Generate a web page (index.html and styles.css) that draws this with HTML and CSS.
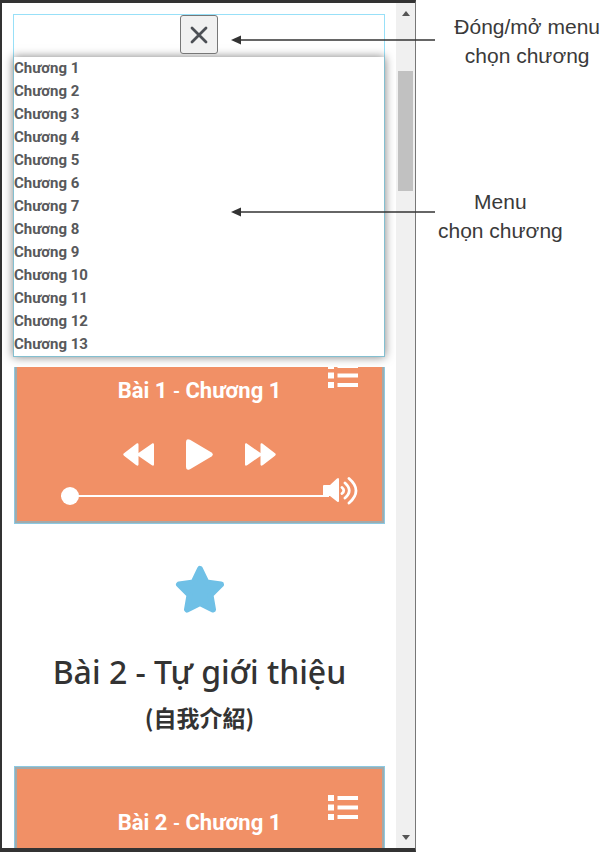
FILE: index.html
```
<!DOCTYPE html>
<html lang="vi">
<head>
<meta charset="utf-8">
<meta name="viewport" content="width=device-width, initial-scale=1">
<title>Menu chọn chương</title>
<link rel="stylesheet" href="styles.css">
</head>
<body>
<svg class="sprite" aria-hidden="true">
  <symbol id="list" viewBox="0 0 30 25">
    <path d="M0 0h6v6H0zM0 9.500h6v6H0zM0 19h6v6H0z"/>
    <path d="M9.500 1h20.500v4H9.500zM9.500 10.500h20.500v4H9.500zM9.500 20h20.500v4H9.500z"/>
  </symbol>
  <symbol id="skip" viewBox="0 0 31 23">
    <path d="M0 1.500Q0 0 1.500 .3L2.500 1 15.500 10V1.500Q15.500 0 17 .3L18 1 30 10.300Q31.500 11.500 30 12.700L18 22Q15.500 23.500 15.500 21.500V13L2.500 22Q0 23.500 0 21.500Z"/>
  </symbol>
  <symbol id="play" viewBox="0 0 27 31">
    <path d="M0 3Q0-1 4 .8L25.500 13.500Q28 15.500 25.500 17.500L4 30.200Q0 32 0 28Z"/>
  </symbol>
  <symbol id="volume" viewBox="0 0 35 28">
    <path d="M1 8h6l7-6.500Q16 0 16 2.500v21Q16 26 14 24.500L7 19H1Q0 19 0 18V9Q0 8 1 8Z"/>
    <path d="M19 10.500q3.500 3 0 6M22 6q8.500 7.500 0 15M26 1.500q14 12 0 24.500" fill="none" stroke="currentColor" stroke-width="2.800" stroke-linecap="round"/>
  </symbol>
  <symbol id="arrow" viewBox="0 0 204 10">
    <path d="M0 5 10 .5v9z"/>
    <path d="M9 4.300h195v1.400H9z"/>
  </symbol>
</svg>

<main class="figure">
  <section class="phone">
    <div class="page">
      <nav class="chapters" aria-label="Chọn chương">
        <div class="toggle-row">
          <button class="toggle" type="button" aria-label="Đóng menu">
            <svg width="18" height="18" viewBox="0 0 18 18"><path d="M2 2l14 14M16 2L2 16" fill="none" stroke="#4c4f55" stroke-width="2.800" stroke-linecap="round"/></svg>
          </button>
        </div>
        <ul class="chapter-list">
          <li><a href="#c1">Chương 1</a></li>
          <li><a href="#c2">Chương 2</a></li>
          <li><a href="#c3">Chương 3</a></li>
          <li><a href="#c4">Chương 4</a></li>
          <li><a href="#c5">Chương 5</a></li>
          <li><a href="#c6">Chương 6</a></li>
          <li><a href="#c7">Chương 7</a></li>
          <li><a href="#c8">Chương 8</a></li>
          <li><a href="#c9">Chương 9</a></li>
          <li><a href="#c10">Chương 10</a></li>
          <li><a href="#c11">Chương 11</a></li>
          <li><a href="#c12">Chương 12</a></li>
          <li><a href="#c13">Chương 13</a></li>
        </ul>
      </nav>

      <div class="lessons">
        <article class="player player-scrolled">
          <header class="player-head">
            <h2 class="player-title">Bài 1 <small>-</small> Chương 1</h2>
            <button class="icon-button list-button" type="button" aria-label="Danh sách"><svg width="30" height="25"><use href="#list"/></svg></button>
          </header>
          <div class="controls">
            <button class="icon-button flip" type="button" aria-label="Lùi"><svg width="31" height="23"><use href="#skip"/></svg></button>
            <button class="icon-button" type="button" aria-label="Phát"><svg width="27" height="31"><use href="#play"/></svg></button>
            <button class="icon-button" type="button" aria-label="Tới"><svg width="31" height="23"><use href="#skip"/></svg></button>
          </div>
          <div class="progress">
            <input class="seek" type="range" min="0" max="100" value="0" aria-label="Vị trí phát">
            <button class="icon-button volume" type="button" aria-label="Âm lượng"><svg width="35" height="28"><use href="#volume"/></svg></button>
          </div>
        </article>

        <header class="lesson-head">
          <svg class="star" width="50" height="48" viewBox="0 0 50 48"><path d="M25 4 31.500 17.500 46 19.500 35.500 30 38 44.500 25 38 12 44.500 14.500 30 4 19.500 18.500 17.500Z" fill="#6fc0e6" stroke="#6fc0e6" stroke-width="6" stroke-linejoin="round"/></svg>
          <h1 class="lesson-title">Bài 2 - Tự giới thiệu</h1>
          <p class="lesson-sub" lang="zh-Hant">(自我介紹)</p>
        </header>

        <article class="player">
          <header class="player-head">
            <h2 class="player-title">Bài 2 <small>-</small> Chương 1</h2>
            <button class="icon-button list-button" type="button" aria-label="Danh sách"><svg width="30" height="25"><use href="#list"/></svg></button>
          </header>
        </article>
      </div>
    </div>

    <div class="scrollbar" aria-hidden="true">
      <svg width="8" height="5" viewBox="0 0 8 5"><path d="M0 5 4 0l4 5z"/></svg>
      <div class="track"><div class="thumb"></div></div>
      <svg width="8" height="5" viewBox="0 0 8 5"><path d="M0 0h8L4 5z"/></svg>
    </div>
  </section>

  <aside class="notes">
    <p class="note note-toggle">Đóng/mở menu<br>chọn chương</p>
    <p class="note note-menu">Menu<br>chọn chương</p>
  </aside>
  <svg class="arrow arrow-toggle" width="204" height="10" aria-hidden="true"><use href="#arrow"/></svg>
  <svg class="arrow arrow-menu" width="204" height="10" aria-hidden="true"><use href="#arrow"/></svg>
</main>
</body>
</html>
```
FILE: styles.css
```
* {
  box-sizing: border-box;
}

body,
h1,
h2,
p,
ul {
  margin: 0;
  padding: 0;
}

body {
  background: #fff;
  font-family: Roboto, "Liberation Sans", sans-serif;
}

svg {
  display: block;
}

.sprite {
  position: absolute;
  width: 0;
  height: 0;
}

.figure {
  position: relative;
  display: flex;
  height: 100vh;
  overflow: hidden;
}

.phone {
  flex: 1;
  display: flex;
  min-width: 0;
  border: solid #333;
  border-width: 3px 1px 4px 2px;
  border-right-color: #777;
}

.page {
  flex: 1;
  display: flex;
  flex-direction: column;
  min-width: 0;
  padding: 11px 11px 0 11px;
}

/* Chapter menu */

.chapters {
  flex: none;
  border: 1px solid #98e0f8;
}

.toggle-row {
  display: flex;
  justify-content: center;
  height: 42px;
}

.toggle {
  display: grid;
  place-items: center;
  width: 38px;
  height: 39px;
  padding: 0;
  border: 1px solid #777;
  border-radius: 3px;
  background: #f1f1f1;
}

.chapter-list {
  margin: 0 -1px -1px;
  border: solid #83bfd0;
  border-width: 0 1px 1px;
  background: #fff;
  box-shadow: 0 0 9px rgba(0, 0, 0, .5);
  list-style: none;
}

.chapter-list a {
  display: block;
  color: #58595b;
  font-size: 15px;
  font-weight: 700;
  line-height: 23px;
  text-decoration: none;
}

/* Lessons */

.lessons {
  flex: 1;
  min-height: 0;
  margin-top: 10px;
  padding: 0 0 0 1px;
  overflow: hidden;
}

.player {
  height: 190px;
  border: 3px solid #a2aaab;
  outline: 1px solid #8cc9e2;
  outline-offset: -1px;
  background: #f19066;
  color: #fff;
}

.player-scrolled {
  margin-top: -33px;
}

.player-head {
  display: grid;
  grid-template-columns: 1fr auto 1fr;
  padding: 26px 24px 0;
}

.player-title {
  grid-column: 2;
  padding-top: 13px;
  font-size: 22px;
  font-weight: 700;
  line-height: 30px;
}

.player-title small {
  font-size: 18px;
}

.icon-button {
  display: block;
  padding: 0;
  border: 0;
  background: none;
  color: inherit;
}

.icon-button svg {
  fill: currentColor;
}

.list-button {
  justify-self: end;
  align-self: start;
}

.flip {
  transform: scaleX(-1);
}

.controls {
  display: flex;
  justify-content: center;
  align-items: center;
  gap: 32px;
  padding-top: 32px;
}

.progress {
  display: flex;
  align-items: flex-start;
  padding: 7px 24px 0 44px;
}

.seek {
  flex: 1;
  min-width: 0;
  height: 18px;
  margin: 10px -6px 0 0;
  appearance: none;
  background: linear-gradient(#fff, #fff) center / 100% 2px no-repeat;
}

.seek::-webkit-slider-thumb {
  appearance: none;
  width: 18px;
  height: 18px;
  border-radius: 50%;
  background: #fff;
}

.lesson-head {
  display: flex;
  flex-direction: column;
  align-items: center;
  height: 242px;
  padding-top: 41px;
  color: #333;
}

.lesson-title {
  padding-top: 35px;
  font-family: "Noto Sans", sans-serif;
  font-size: 32px;
  font-weight: 500;
  line-height: 48px;
  white-space: nowrap;
}

.lesson-sub {
  padding-top: 5px;
  font-family: "Noto Sans CJK TC", sans-serif;
  font-size: 23px;
  font-weight: 700;
  line-height: 32px;
}

/* Scrollbar */

.scrollbar {
  display: flex;
  flex-direction: column;
  align-items: center;
  width: 19px;
  padding: 8px 0;
  background: #f0f0f0;
  fill: #555;
}

.track {
  flex: 1;
  padding-top: 55px;
}

.thumb {
  width: 15px;
  height: 120px;
  background: #c1c1c1;
}

/* Annotations */

.notes {
  display: flex;
  flex-direction: column;
  align-items: flex-start;
  width: 184px;
  padding: 12px 0 0 22px;
}

.note {
  color: #3a3a3a;
  font-family: "Liberation Sans", sans-serif;
  font-size: 21px;
  line-height: 29px;
  text-align: center;
  white-space: nowrap;
}

.note-toggle {
  align-self: flex-end;
}

.note-menu {
  margin-top: 117px;
}

.arrow {
  position: absolute;
  right: 165px;
  fill: #333;
}

.arrow-toggle {
  top: 35px;
}

.arrow-menu {
  top: 207px;
}
```
